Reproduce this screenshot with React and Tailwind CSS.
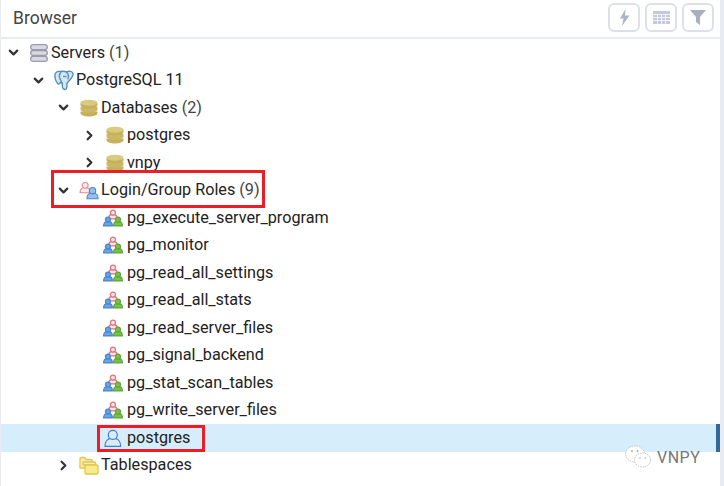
import { ChevronDown, ChevronRight } from "lucide-react";

function ServersIcon() {
  return (
    <svg width="18" height="18" viewBox="0 0 18 18" fill="#d9d9e2" stroke="#9a9bac" strokeWidth="1.3">
      <rect x="0.7" y="0.7" width="16.6" height="5" rx="2.4" />
      <rect x="0.7" y="6.500" width="16.6" height="5" rx="2.4" />
      <rect x="0.7" y="12.300" width="16.6" height="5" rx="2.4" />
    </svg>
  );
}

function ElephantIcon() {
  return (
    <svg width="20" height="21" viewBox="0 0 20 21" fill="#d5e5f2" stroke="#5590bd" strokeWidth="1.4" strokeLinejoin="round">
      <path d="M6.500 1.500C3 .8.700 2.600.800 6c.1 2.700 1.400 6 2.800 7.500 1 1 2 .4 2.600-1 .8.700 1.500.7 2 .4l.2 3.800c.2 1.900 1.700 3.100 3.300 2.600 1.400-.5 1.100-2.300 1.100-4 0-1.200.2-2.100 1-3.100C15.800 10 19.700 6.500 19.100 3.500 18.500 1.200 14.700.7 12.500 2 11 1.300 8.800 1.100 6.500 1.500z" />
      <path d="M7 2c-1.800 2.200-2 5.500-.4 8 .7 1 .9 2 .8 3M12.500 2c1.800 1.800 2.400 4.500 1.400 7.200" fill="none" />
      <path d="M9 6.500h3.500" fill="none" />
    </svg>
  );
}

function DbIcon() {
  return (
    <svg width="18" height="18" viewBox="0 0 18 18">
      <path d="M.5 12.600v1.600c0 1.800 3.800 3.200 8.500 3.200s8.500-1.400 8.500-3.200v-1.600z" fill="#c6b15a" />
      <path d="M.5 8v2.400c0 1.800 3.800 3.200 8.500 3.200s8.500-1.400 8.500-3.200V8z" fill="#cbb866" />
      <path d="M.5 4v2.300c0 1.800 3.800 3.200 8.500 3.200s8.500-1.400 8.500-3.200V4z" fill="#c6b15a" />
      <ellipse cx="9" cy="3.700" rx="8.500" ry="3" fill="#d9ca80" />
    </svg>
  );
}

function FolderIcon() {
  return (
    <svg width="20" height="19" viewBox="0 0 20 19" stroke="#e0c64f" strokeWidth="1.3" strokeLinejoin="round">
      <path d="M1 3c0-1 .5-1.500 1.500-1.500h3L7 3.500h5c.8 0 1.200.4 1.200 1.200V12H1z" fill="#f7eeb0" />
      <path d="M4 9V6h11.500c.6 0 1 .4 1 1v2z" fill="#f7eeb0" />
      <rect x="6" y="9" width="13" height="9" rx="1" fill="#f6ec8a" />
    </svg>
  );
}

function Person({ x, y, s = 1, fill, stroke }) {
  return (
    <g transform={`translate(${x} ${y}) scale(${s})`} fill={fill} stroke={stroke} strokeWidth={1.2 / s}>
      <path d="M.6 10.500c0-3 1.800-4.500 3-4.800h3.800c1.200.3 3 1.800 3 4.800z" strokeLinejoin="round" />
      <circle cx="5.500" cy="3.400" r="2.800" />
    </g>
  );
}

function GroupIcon() {
  return (
    <svg width="20" height="18" viewBox="0 0 20 18">
      <Person x={5} y={0.5} s={0.9} fill="#f9e4e5" stroke="#dc7480" />
      <Person x={0} y={7.500} s={0.9} fill="#6fa3de" stroke="#4a86cc" />
      <Person x={10} y={7.500} s={0.9} fill="#7cc04c" stroke="#5aa836" />
    </svg>
  );
}

function LoginGroupIcon() {
  return (
    <svg width="22" height="20" viewBox="0 0 22 20">
      <Person x={0.500} y={1} s={1.15} fill="#fbe9ea" stroke="#e08a92" />
      <Person x={8} y={6.500} s={1.25} fill="#98c0ec" stroke="#4a86cc" />
    </svg>
  );
}

function UserIcon() {
  return (
    <svg width="20" height="18" viewBox="0 0 20 18">
      <Person x={1} y={0.500} s={1.6} fill="#dcebfa" stroke="#3f7fd0" />
    </svg>
  );
}

function Row({ indent, open, icon, label, count, selected }) {
  return (
    <div className={`flex h-[27.5px] items-center text-[16.2px] text-[#222] ${selected ? "bg-[#d6edfb]" : ""} ${indent}`}>
      <span className="flex w-[23px] shrink-0 items-center">
        {open === true && <ChevronDown size={15} strokeWidth={3.5} className="text-[#333]" />}
        {open === false && <ChevronRight size={15} strokeWidth={3.5} className="text-[#333]" />}
      </span>
      {icon}
      <span className="whitespace-nowrap">
        {label}
        {count && <span className="text-[#444]"> {count}</span>}
      </span>
    </div>
  );
}

const roles = [
  "pg_execute_server_program",
  "pg_monitor",
  "pg_read_all_settings",
  "pg_read_all_stats",
  "pg_read_server_files",
  "pg_signal_backend",
  "pg_stat_scan_tables",
  "pg_write_server_files",
];

function ToolButton({ children }) {
  return (
    <button className="flex h-[29px] w-[32px] items-center justify-center rounded-[6px] border-2 border-[#dde0e6] bg-white">
      {children}
    </button>
  );
}

function TreeIcon({ children }) {
  return <span className="mr-[2px] flex w-[20px] shrink-0 items-center justify-center">{children}</span>;
}

function LeafIcon({ children }) {
  return <span className="mr-[4px] flex w-[20px] shrink-0 items-center justify-center">{children}</span>;
}

export default function App() {
  return (
    <div className="relative h-[486px] w-[724px] overflow-hidden bg-white font-['Roboto',sans-serif]">
      <div className="flex h-full">
        <div className="w-[1px] shrink-0 bg-[#e8ebf1]" />
        <div className="min-w-0 flex-1">
          <div className="flex h-[39px] items-center justify-between border-b-2 border-[#e8ebf1] pl-[12px] pr-[6px]">
            <span className="text-[17.5px] text-[#444]">Browser</span>
            <div className="flex gap-[5px] pb-[3px]">
              <ToolButton>
                <svg width="11" height="17" viewBox="0 0 11 17" fill="#aeb4c2">
                  <path d="M6.500 0 1 9.500h3.500L3 17 10.500 6.500H6z" />
                </svg>
              </ToolButton>
              <ToolButton>
                <svg width="17" height="13" viewBox="0 0 17 13" fill="#c6c9dc" stroke="#fff" strokeWidth="0.8">
                  <rect x="0" y="0" width="17" height="13" stroke="none" />
                  <path d="M0 3.500h17M0 6.500h17M0 9.500h17M4.500 3v10M8.500 3v10M12.500 3v10" fill="none" />
                </svg>
              </ToolButton>
              <ToolButton>
                <svg width="16" height="15" viewBox="0 0 16 15" fill="#a9afbd">
                  <path d="M0 0h16L10 7v8L6 12V7z" />
                </svg>
              </ToolButton>
            </div>
          </div>
          <div className="relative">
            <Row indent="pl-[5px]" open={true} label="Servers" count="(1)" icon={<TreeIcon><ServersIcon /></TreeIcon>} />
            <Row indent="pl-[30px]" open={true} label="PostgreSQL 11" icon={<TreeIcon><ElephantIcon /></TreeIcon>} />
            <Row indent="pl-[55px]" open={true} label="Databases" count="(2)" icon={<TreeIcon><DbIcon /></TreeIcon>} />
            <Row indent="pl-[81px]" open={false} label="postgres" icon={<TreeIcon><DbIcon /></TreeIcon>} />
            <Row indent="pl-[81px]" open={false} label="vnpy" icon={<TreeIcon><DbIcon /></TreeIcon>} />
            <Row indent="pl-[55px]" open={true} label="Login/Group Roles" count="(9)" icon={<TreeIcon><LoginGroupIcon /></TreeIcon>} />
            {roles.map((r) => (
              <Row key={r} indent="pl-[79px]" label={r} icon={<LeafIcon><GroupIcon /></LeafIcon>} />
            ))}
            <div className="relative">
              <Row indent="pl-[79px]" selected label="postgres" icon={<LeafIcon><UserIcon /></LeafIcon>} />
              <div className="absolute right-0 top-0 h-full w-[4px] bg-[#2f6a9c]" />
            </div>
            <Row indent="pl-[55px]" open={false} label="Tablespaces" icon={<TreeIcon><FolderIcon /></TreeIcon>} />
          </div>
        </div>
        <div className="w-[4px] shrink-0 bg-[#e8ebf1]" />
      </div>

      {/* annotations on top of the screenshot */}
      <div className="absolute left-[51px] top-[170px] h-[38px] w-[214px] border-[3px] border-[#ee1c25]" />
      <div className="absolute left-[97px] top-[425px] h-[27px] w-[108px] border-[3px] border-[#ee1c25]" />

      <div className="absolute left-[625px] top-[443px] flex items-center gap-[6px]">
        <svg width="26" height="24" viewBox="0 0 26 24" fill="#fff" stroke="#9a9a9a" strokeWidth="0.6" strokeDasharray="1.500 1">
          <ellipse cx="10" cy="9" rx="9.500" ry="8" />
          <ellipse cx="17.500" cy="15" rx="8" ry="7" />
          <circle cx="7" cy="6" r="1" fill="#aaa" stroke="none" />
          <circle cx="12.500" cy="6" r="1" fill="#aaa" stroke="none" />
          <circle cx="15" cy="13" r="0.8" fill="#aaa" stroke="none" />
          <circle cx="20" cy="13" r="0.8" fill="#aaa" stroke="none" />
        </svg>
        <span className="pt-[3px] text-[16px] tracking-[0.5px] text-[#777]">VNPY</span>
      </div>
    </div>
  );
}
